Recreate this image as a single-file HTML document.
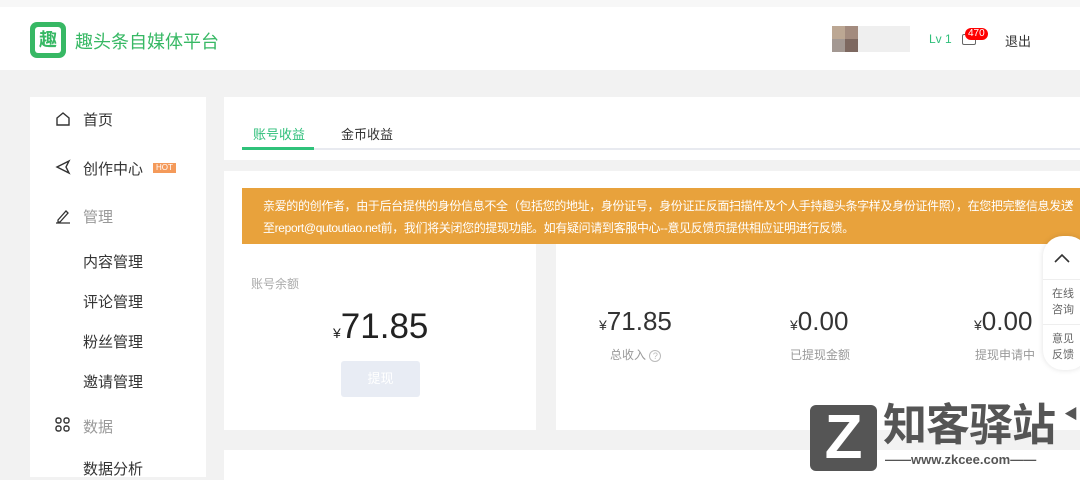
<!DOCTYPE html>
<html><head><meta charset="utf-8"><style>
*{margin:0;padding:0;box-sizing:border-box}
body{width:1080px;height:471px;overflow:hidden;background:#f2f2f2;font-family:"Liberation Sans","Noto Sans CJK SC",sans-serif;position:relative;color:#333}
.abs{position:absolute}
.hdr{left:0;top:0;width:1080px;height:70px;background:#fff;border-top:7px solid #f7f7f7}
.side{left:30px;top:97px;width:176px;height:380px;background:#fff}
.mi{position:absolute;left:53px;font-size:15px;color:#333}
.ic{position:absolute;left:25px}
.card{background:#fff}
</style></head><body>
<div class="abs hdr"></div>
<div class="abs" style="left:30px;top:22px;width:36px;height:36px;background:#37b864;border-radius:7px"></div>
<div class="abs" style="left:35px;top:27px;width:26px;height:26px;background:#fff;border-radius:3px;color:#37b864;font-size:18px;font-weight:bold;line-height:26px;text-align:center">趣</div>
<div class="abs" style="left:75px;top:28px;font-size:18px;color:#37b864">趣头条自媒体平台</div>
<div class="abs" style="left:832px;top:26px;width:13px;height:13px;background:#bca793"></div>
<div class="abs" style="left:845px;top:26px;width:13px;height:13px;background:#a38b7e"></div>
<div class="abs" style="left:832px;top:39px;width:13px;height:13px;background:#a39892"></div>
<div class="abs" style="left:845px;top:39px;width:13px;height:13px;background:#7d6860"></div>
<div class="abs" style="left:858px;top:26px;width:52px;height:26px;background:#efefef"></div>
<div class="abs" style="left:929px;top:32px;font-size:12px;color:#2fbf7a">Lv 1</div>
<div class="abs" style="left:962px;top:34px;width:14px;height:11px;border:1.5px solid #666;border-radius:2px"></div>
<div class="abs" style="left:965px;top:28px;background:#f00;color:#fff;font-size:10px;border-radius:7px;padding:0 3px;line-height:12px">470</div>
<div class="abs" style="left:1005px;top:31px;font-size:13px;color:#333">退出</div>

<div class="abs side">
 <svg class="ic" style="top:14px" width="16" height="16" viewBox="0 0 16 16"><path d="M2 7L8 2l6 5v7H2z" fill="none" stroke="#333" stroke-width="1.4"/></svg>
 <div class="mi" style="top:12px">首页</div>
 <svg class="ic" style="top:62px" width="16" height="16" viewBox="0 0 16 16"><path d="M14 2L2 8l12 6-3-6z" fill="none" stroke="#333" stroke-width="1.4"/></svg>
 <div class="mi" style="top:61px">创作中心</div>
 <div class="abs" style="left:123px;top:66px;background:#f49a5a;color:#fff;font-size:8px;padding:0 3px;line-height:10px">HOT</div>
 <svg class="ic" style="top:111px" width="16" height="16" viewBox="0 0 16 16"><path d="M3 12l8-9 2 2-8 9H3zM1 15h14" fill="none" stroke="#333" stroke-width="1.3"/></svg>
 <div class="mi" style="top:109px;color:#999">管理</div>
 <div class="mi" style="top:154px">内容管理</div>
 <div class="mi" style="top:194px">评论管理</div>
 <div class="mi" style="top:234px">粉丝管理</div>
 <div class="mi" style="top:274px">邀请管理</div>
 <svg class="ic" style="top:320px" width="16" height="16" viewBox="0 0 16 16" fill="none" stroke="#333" stroke-width="1.4"><rect x="1" y="1" width="5" height="5" rx="2"/><rect x="9" y="1" width="5" height="5" rx="2"/><rect x="1" y="9" width="5" height="5" rx="2"/><rect x="9" y="9" width="5" height="5" rx="2"/></svg>
 <div class="mi" style="top:319px;color:#999">数据</div>
 <div class="mi" style="top:361px">数据分析</div>
</div>

<div class="abs card" style="left:224px;top:97px;width:856px;height:63px"></div>
<div class="abs" style="left:253px;top:124px;font-size:13px;color:#2fbf7a">账号收益</div>
<div class="abs" style="left:341px;top:124px;font-size:13px;color:#333">金币收益</div>
<div class="abs" style="left:242px;top:148px;width:838px;height:2px;background:#e8eaf0"></div>
<div class="abs" style="left:242px;top:147px;width:72px;height:3px;background:#2fc27a"></div>

<div class="abs card" style="left:224px;top:171px;width:856px;height:73px"></div>
<div class="abs" style="left:242px;top:188px;width:838px;height:56px;background:#e8a23c;color:#fff;font-size:12px;line-height:22px;padding:7px 0 0 21px;white-space:nowrap;overflow:hidden;letter-spacing:-0.35px">亲爱的的创作者，由于后台提供的身份信息不全（包括您的地址，身份证号，身份证正反面扫描件及个人手持趣头条字样及身份证件照），在您把完整信息发送<br>至report@qutoutiao.net前，我们将关闭您的提现功能。如有疑问请到客服中心--意见反馈页提供相应证明进行反馈。</div>
<div class="abs" style="left:1067px;top:196px;color:#fff;font-size:12px">×</div>

<div class="abs card" style="left:224px;top:244px;width:312px;height:186px"></div>
<div class="abs" style="left:251px;top:275px;font-size:12px;color:#aaa">账号余额</div>
<div class="abs" style="left:333px;top:307px;font-size:35px;color:#222"><span style="font-size:14px">¥</span>71.85</div>
<div class="abs" style="left:341px;top:361px;width:79px;height:36px;background:#e8ecf4;border-radius:3px;color:#fff;font-size:13px;text-align:center;line-height:36px">提现</div>

<div class="abs card" style="left:556px;top:244px;width:524px;height:186px"></div>
<div class="abs" style="left:599px;top:306px;font-size:26px;color:#333"><span style="font-size:14px">¥</span>71.85</div>
<div class="abs" style="left:610px;top:346px;font-size:12px;color:#999">总收入 <span style="display:inline-block;width:12px;height:12px;border:1px solid #bbb;border-radius:50%;font-size:9px;line-height:10px;text-align:center;color:#bbb">?</span></div>
<div class="abs" style="left:790px;top:306px;font-size:26px;color:#333"><span style="font-size:14px">¥</span>0.00</div>
<div class="abs" style="left:790px;top:346px;font-size:12px;color:#999">已提现金额</div>
<div class="abs" style="left:974px;top:306px;font-size:26px;color:#333"><span style="font-size:14px">¥</span>0.00</div>
<div class="abs" style="left:975px;top:346px;font-size:12px;color:#999">提现申请中</div>

<div class="abs" style="left:1043px;top:236px;width:45px;height:134px;background:#fff;border-radius:20px;box-shadow:0 0 6px rgba(0,0,0,.12)"></div>
<svg class="abs" style="left:1053px;top:252px" width="18" height="12" viewBox="0 0 18 12"><path d="M2 10l7-7 7 7" fill="none" stroke="#333" stroke-width="1.6"/></svg>
<div class="abs" style="left:1043px;top:279px;width:37px;height:1px;background:#eee"></div>
<div class="abs" style="left:1052px;top:286px;font-size:11px;color:#666;line-height:16px">在线<br>咨询</div>
<div class="abs" style="left:1043px;top:324px;width:37px;height:1px;background:#eee"></div>
<div class="abs" style="left:1052px;top:331px;font-size:11px;color:#666;line-height:16px">意见<br>反馈</div>

<div class="abs card" style="left:224px;top:450px;width:856px;height:30px"></div>

<div class="abs" style="left:810px;top:405px;width:67px;height:66px;background:#555;border-radius:6px;color:#fff;font-size:62px;font-weight:bold;line-height:66px;text-align:center">Z</div>
<div class="abs" style="left:883px;top:400px;font-size:44px;font-weight:bold;color:#555;letter-spacing:-1px;line-height:52px">知客驿站</div>
<div class="abs" style="left:1064px;top:404px;color:#555;font-size:14px">◀</div>
<div class="abs" style="left:885px;top:452px;font-size:13px;font-weight:bold;color:#555;line-height:16px">——www.zkcee.com——</div>
</body></html>
